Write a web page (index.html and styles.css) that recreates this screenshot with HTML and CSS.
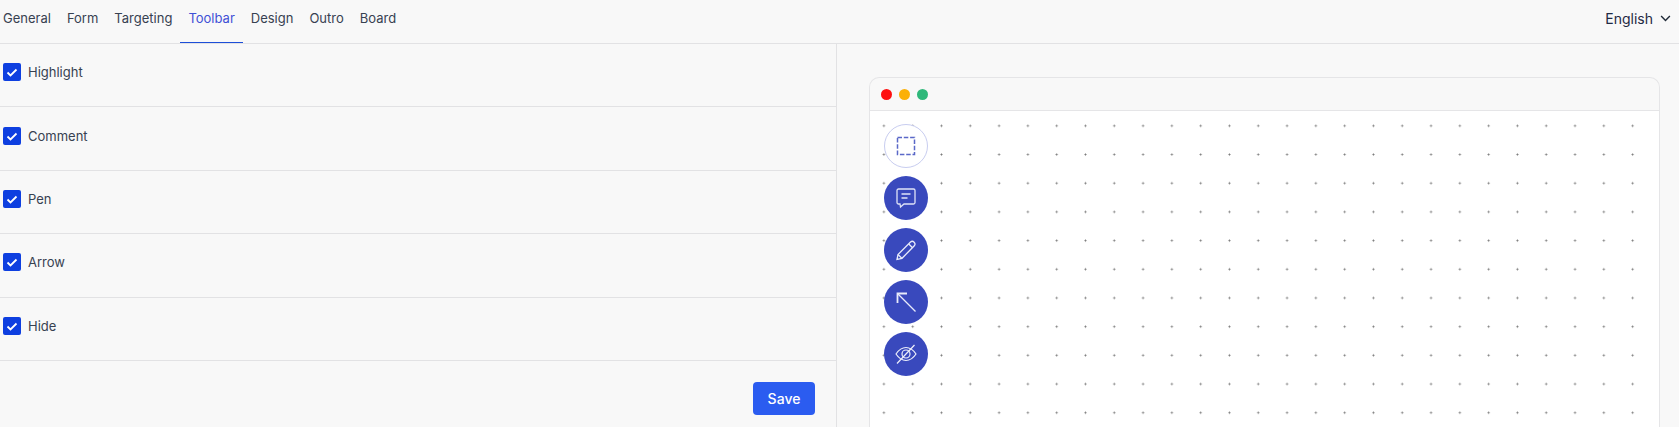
FILE: index.html
```html
<!DOCTYPE html>
<html lang="en">
<head>
    <meta charset="UTF-8">
    <meta name="viewport" content="width=device-width, initial-scale=1.0">
    <title>Toolbar settings</title>
    <link rel="stylesheet" href="styles.css">
</head>
<body>
    <!-- Tabs -->
    <header class="topbar">
        <nav class="tabs">
            <a class="tab" href="#">General</a>
            <a class="tab" href="#">Form</a>
            <a class="tab" href="#">Targeting</a>
            <a class="tab active" href="#">Toolbar</a>
            <a class="tab" href="#">Design</a>
            <a class="tab" href="#">Outro</a>
            <a class="tab" href="#">Board</a>
        </nav>
        <div class="lang">
            <span>English</span>
            <svg class="chevron" viewBox="0 0 12 8" width="11" height="7"><path d="M1 1.2l5 5 5-5" fill="none" stroke="#1f2937" stroke-width="1.6"/></svg>
        </div>
    </header>

    <main class="content">
        <!-- Options -->
        <section class="options">
            <label class="row"><span class="check"><svg viewBox="0 0 18 18" width="18" height="18"><path d="M4.5 9.5l3 3 6-6" fill="none" stroke="#fff" stroke-width="1.8"/></svg></span>Highlight</label>
            <label class="row"><span class="check"><svg viewBox="0 0 18 18" width="18" height="18"><path d="M4.5 9.5l3 3 6-6" fill="none" stroke="#fff" stroke-width="1.8"/></svg></span>Comment</label>
            <label class="row"><span class="check"><svg viewBox="0 0 18 18" width="18" height="18"><path d="M4.5 9.5l3 3 6-6" fill="none" stroke="#fff" stroke-width="1.8"/></svg></span>Pen</label>
            <label class="row"><span class="check"><svg viewBox="0 0 18 18" width="18" height="18"><path d="M4.5 9.5l3 3 6-6" fill="none" stroke="#fff" stroke-width="1.8"/></svg></span>Arrow</label>
            <label class="row"><span class="check"><svg viewBox="0 0 18 18" width="18" height="18"><path d="M4.5 9.5l3 3 6-6" fill="none" stroke="#fff" stroke-width="1.8"/></svg></span>Hide</label>
            <div class="actions">
                <button class="save">Save</button>
            </div>
        </section>

        <!-- Preview -->
        <section class="preview">
            <div class="window">
                <div class="titlebar">
                    <span class="light red"></span>
                    <span class="light amber"></span>
                    <span class="light green"></span>
                </div>
                <div class="canvas">
                    <div class="tool tool-light">
                        <svg viewBox="0 0 24 24" width="24" height="24"><rect x="3.5" y="3.5" width="17" height="17" fill="none" stroke="#5a68c8" stroke-width="1.5" stroke-dasharray="4.5 1.8"/></svg>
                    </div>
                    <div class="tool">
                        <svg viewBox="0 0 24 24" width="24" height="24" fill="none" stroke="#dfe3f7" stroke-width="1.3"><path d="M4.5 3h15A1.5 1.5 0 0 1 21 4.500v12a1.500 1.500 0 0 1-1.500 1.500H10l-3.500 3-.5-3H4.500A1.500 1.500 0 0 1 3 16.500v-12A1.500 1.500 0 0 1 4.500 3z"/><path d="M7.500 8h9M7.500 12h6"/></svg>
                    </div>
                    <div class="tool">
                        <svg viewBox="0 0 24 24" width="24" height="24" fill="none" stroke="#e8ebfa" stroke-width="1.3"><path d="M3 21.500l1-5L16.500 4a2.700 2.700 0 0 1 3.800 3.800L8 20.300z"/><path d="M14.800 6l3.500 3.500M4 16.500l3.800 3.800"/></svg>
                    </div>
                    <div class="tool">
                        <svg viewBox="0 0 24 24" width="24" height="24" fill="none" stroke="#e8ebfa" stroke-width="1.300"><path d="M3.500 3.500L21.500 21.500"/><path d="M3.500 13V3.500H13" stroke-width="1.800"/></svg>
                    </div>
                    <div class="tool">
                        <svg viewBox="0 0 24 24" width="24" height="24" fill="none" stroke="#eef0fb" stroke-width="1.200"><path d="M2 12c3-4.500 6.300-6.500 10-6.500s7 2 10 6.500c-3 4.500-6.300 6.500-10 6.500S5 16.500 2 12z"/><circle cx="12" cy="12" r="4"/><path d="M3 21.500L20.500 3"/></svg>
                    </div>
                </div>
            </div>
        </section>
    </main>
</body>
</html>
```

FILE: styles.css
```css
/* General */
html, body {
    height: 100%;
}

body {
    margin: 0;
    height: 427px;
    overflow: hidden;
    display: flex;
    flex-direction: column;
    background: #f8f8f8;
    color: #374151;
    font-family: Inter, "Liberation Sans", sans-serif;
    font-size: 13px;
}

/* Top bar */
.topbar {
    flex: none;
    height: 43px;
    display: flex;
    justify-content: space-between;
    border-bottom: 1px solid #e2e2e4;
}

.tabs {
    display: flex;
    padding-left: 0;
}

.tab {
    display: flex;
    align-items: center;
    height: 43px;
    padding: 0 8px 8px;
    box-sizing: border-box;
    color: #374151;
    text-decoration: none;
}

.tab:first-child {
    padding-left: 3px;
}

.tab.active {
    color: #3f51d6;
    border-bottom: 1px solid #1d4ed8;
    padding-bottom: 7px;
}

.lang {
    display: flex;
    align-items: center;
    gap: 7px;
    padding: 0 8px 6px 0;
    color: #1f2a44;
    font-size: 14px;
}

/* Main area */
.content {
    flex: 1;
    min-height: 0;
    display: flex;
}

.options {
    flex: none;
    width: 836px;
    border-right: 1px solid #e2e2e4;
}

.row {
    height: 62.500px;
    display: flex;
    align-items: center;
    gap: 7px;
    padding-left: 3px;
    padding-bottom: 6px;
    box-sizing: content-box;
    height: 56.400px;
    border-bottom: 1px solid #e2e2e4;
}

.check {
    width: 18px;
    height: 18px;
    border-radius: 2px;
    background: #0e3fe0;
    display: flex;
}

.actions {
    display: flex;
    justify-content: flex-end;
    padding: 21px 21px 0 0;
}

.save {
    width: 62px;
    height: 33px;
    border: none;
    border-radius: 4px;
    background: #2b5cf0;
    color: #fff;
    font-family: inherit;
    font-size: 14px;
    font-weight: 500;
}

/* Preview window */
.preview {
    flex: 1;
    padding: 33px 19px 0 32px;
}

.window {
    height: 100%;
    border: 1px solid #e5e5e7;
    border-bottom: none;
    border-radius: 10px 10px 0 0;
    display: flex;
    flex-direction: column;
}

.titlebar {
    flex: none;
    height: 32px;
    display: flex;
    align-items: center;
    gap: 7px;
    padding-left: 11px;
    border-bottom: 1px solid #e5e5e7;
}

.light {
    width: 11px;
    height: 11px;
    border-radius: 50%;
}

.red { background: #fe0f0f; }
.amber { background: #fbb007; }
.green { background: #2fb87a; }

.canvas {
    flex: 1;
    display: flex;
    flex-direction: column;
    gap: 8px;
    padding: 13px 0 0 14px;
    background-color: #fff;
    background-image: radial-gradient(circle, #777 0.8px, transparent 1.2px);
    background-size: 28.800px 28.700px;
    background-position: -0.500px 0.500px;
}

.tool {
    width: 44px;
    height: 44px;
    flex: none;
    border-radius: 50%;
    background: #3949bd;
    display: flex;
    align-items: center;
    justify-content: center;
}

.tool-light {
    box-sizing: border-box;
    background: #fff;
    border: 1px solid #c8cdf0;
}
```
